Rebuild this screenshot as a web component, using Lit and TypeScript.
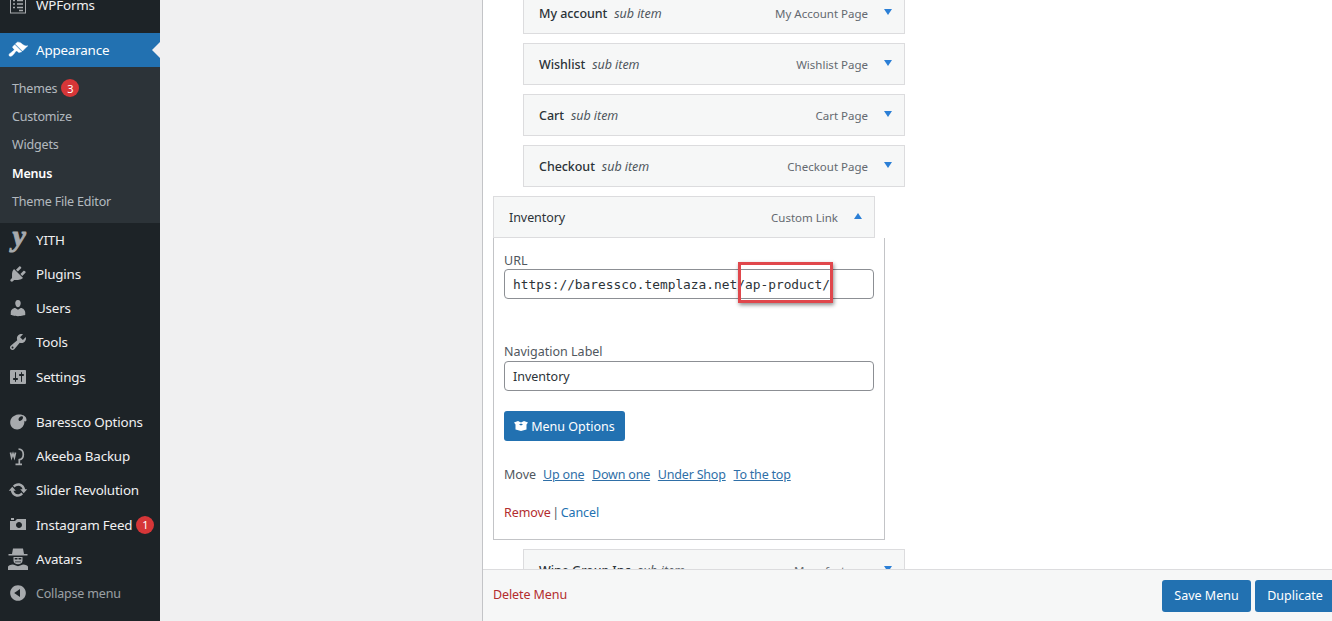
import { LitElement, html, css } from "lit";
import { customElement } from "lit/decorators.js";

const P: Record<string, string> = {
  appearance: "M14.48 11.06L7.41 3.99l1.5-1.5c.5-.56 2.3-.47 3.51.32 1.21.8 1.43 1.28 2.91 2.1 1.18.64 2.45 1.26 4.45.85zm-.71.71L6.7 4.7 4.93 6.47c-.39.39-.39 1.02 0 1.41l1.06 1.06c.39.39.39 1.03 0 1.42-.6.6-1.43 1.11-2.21 1.69-.35.26-.7.53-1.01.84C1.43 13.23.4 14.85 1.4 15.9c.99 1.04 2.65 0 3.99-1.5.3-.32.58-.67.84-1.02.59-.77 1.09-1.6 1.68-2.2.4-.39 1.03-.39 1.42 0l1.06 1.06c.39.39 1.02.39 1.41 0z",
  plugins: "M13.11 4.36L9.87 7.6 8 5.73l3.24-3.24c.35-.34 1.05-.2 1.56.32.52.51.66 1.21.31 1.55zm-8 1.77l.91-1.12 9.01 9.01-1.19.84c-.71.71-2.63 1.16-3.82 1.16H6.14L4.9 17.26c-.59.59-1.54.59-2.12 0-.59-.58-.59-1.53 0-2.12l1.24-1.24v-3.88c0-1.13.4-3.19 1.09-3.89zm7.26 3.97l3.24-3.24c.34-.35 1.04-.21 1.55.31.52.51.66 1.21.31 1.55l-3.24 3.25z",
  users: "M10 9.25c-2.27 0-2.73-3.44-2.73-3.44C7 4.02 7.82 2 9.97 2c2.16 0 2.98 2.02 2.71 3.81 0 0-.41 3.44-2.68 3.44zm0 2.57L12.72 10c2.39 0 4.52 2.33 4.52 4.53v2.49s-3.65 1.13-7.24 1.13c-3.65 0-7.24-1.13-7.24-1.13v-2.49c0-2.25 1.94-4.48 4.47-4.48z",
  tools: "M16.68 9.77c-1.34 1.34-3.3 1.67-4.95.99l-5.41 6.52c-.99.99-2.59.99-3.58 0s-.99-2.59 0-3.57l6.52-5.42c-.68-1.65-.35-3.61.99-4.95 1.28-1.28 3.12-1.62 4.72-1.06l-2.89 2.89 2.82 2.82 2.86-2.87c.53 1.58.18 3.39-1.08 4.65zM3.81 16.21c.4.39 1.04.39 1.43 0 .4-.4.4-1.04 0-1.43-.39-.4-1.03-.4-1.43 0-.39.39-.39 1.03 0 1.43z",
  settings: "M18 16V4c0-.55-.45-1-1-1H3c-.55 0-1 .45-1 1v12c0 .55.45 1 1 1h14c.55 0 1-.45 1-1zM8 11h1c.55 0 1 .45 1 1s-.45 1-1 1H8v1.5c0 .28-.22.5-.5.5s-.5-.22-.5-.5V13H6c-.55 0-1-.45-1-1s.45-1 1-1h1V5.5c0-.28.22-.5.5-.5s.5.22.5.5V11zm5-2h-1c-.55 0-1-.45-1-1s.45-1 1-1h1V5.5c0-.28.22-.5.5-.5s.5.22.5.5V7h1c.55 0 1 .45 1 1s-.45 1-1 1h-1v5.5c0 .28-.22.5-.5.5s-.5-.22-.5-.5V9z",
  palette: "M10.2 2.6c4.4-.6 8.3 1.6 8.3 5.2 0 1-.5 1.7-1.2 1.7-.4 0-.7-.2-1-.5.6 3.9-2.4 8.4-7.2 8.4-3.9 0-6.9-2.8-6.9-6.9 0-4.2 3.3-7.3 8-7.900zm3.4 1.600c-1.400 0-3.100 1.500-3.100 3.200 0 .9.6 1.500 1.400 1.500 1.600 0 3.100-1.700 3.100-3.300 0-.9-.6-1.400-1.400-1.400z",
  update: "M10.2 3.28c3.53 0 6.43 2.61 6.92 6h2.08l-3.5 4-3.5-4h2.32c-.45-1.97-2.21-3.45-4.32-3.45-1.45 0-2.73.71-3.54 1.78L4.95 5.66C6.23 4.2 8.11 3.28 10.2 3.28zm-.4 13.44c-3.52 0-6.43-2.61-6.92-6H.8l3.5-4c1.17 1.33 2.33 2.67 3.5 4H5.48c.45 1.97 2.21 3.45 4.32 3.45 1.45 0 2.73-.71 3.54-1.78l1.71 1.95c-1.28 1.46-3.15 2.38-5.25 2.38z",
  camera: "M6 5V3H3v2h3zm12 10V4H9L7 6H2v9h16zm-7-8c1.66 0 3 1.34 3 3s-1.34 3-3 3-3-1.34-3-3 1.34-3 3-3z",
  collapse: "M10 2.16c4.33 0 7.84 3.51 7.84 7.84s-3.51 7.84-7.84 7.84S2.16 14.33 2.16 10 5.71 2.16 10 2.16zm2 11.72V6.12L6.18 9.97z",
};

const dash = (n: string) => html`<svg class="ico" viewBox="0 0 20 20"><path d=${P[n]} fill="currentColor"></path></svg>`;

const special: Record<string, () => unknown> = {
  wpforms: () => html`<svg class="ico" viewBox="0 0 20 20" fill="none" stroke="currentColor">
    <rect x="2.500" y="2" width="15" height="16" stroke-width="1"></rect>
    <path d="M5 5.500h2M9 5.500h6M5 9h2M9 9h6M5 12.500h2M9 12.500h6M11 15.500h4" stroke-width="1.400"></path></svg>`,
  yith: () => html`<span class="yith">y</span>`,
  akeeba: () => html`<svg class="ico" viewBox="0 0 20 20" fill="none" stroke="currentColor" stroke-width="1.700">
    <path d="M2.500 6.500l1.100 5 1.400-3.800 1.400 3.800 1.100-5"></path>
    <path d="M10.500 3c3.500.3 4.800 2.800 4.800 5.500 0 2.800-1.400 4.800-4 5.200v4M7.500 18.300h6.500"></path></svg>`,
  avatars: () => html`<svg class="ico big" viewBox="0 0 22 22" fill="currentColor">
    <path d="M6 0.500h10l1 5.500h3.500v1.600h-19V6H5z"></path>
    <path d="M6.500 9h9v3.800c0 2-2 3.400-4.500 3.400s-4.500-1.400-4.500-3.400zm1.200 1v1.600h2.800V10zm3.800 0v1.600h2.800V10zM8 13.500v.8h6v-.8z" fill-rule="evenodd"></path>
    <path d="M1 22v-3.300c0-1.200 2.500-2 5-2.300l5 1.800 5-1.800c2.500.3 5 1.100 5 2.300V22z"></path></svg>`,
};

type Side = { label: string; icon: string; badge?: string; cls?: string };
const group1: Side[] = [
  { label: "YITH", icon: "yith" },
  { label: "Plugins", icon: "plugins" },
  { label: "Users", icon: "users" },
  { label: "Tools", icon: "tools" },
  { label: "Settings", icon: "settings" },
];
const group2: Side[] = [
  { label: "Baressco Options", icon: "palette" },
  { label: "Akeeba Backup", icon: "akeeba" },
  { label: "Slider Revolution", icon: "update" },
  { label: "Instagram Feed", icon: "camera", badge: "1" },
  { label: "Avatars", icon: "avatars" },
  { label: "Collapse menu", icon: "collapse", cls: "muted" },
];
const subs = ["Customize", "Widgets"];
const before = [
  ["My account", "My Account Page"],
  ["Wishlist", "Wishlist Page"],
  ["Cart", "Cart Page"],
  ["Checkout", "Checkout Page"],
];

@customElement("app-root")
export class AppRoot extends LitElement {
  static styles = css`
    :host {
      display: flex;
      width: 1332px;
      height: 621px;
      overflow: hidden;
      background: #f0f0f1;
      font-family: "Noto Sans", "Open Sans", sans-serif;
      font-size: 12.500px;
      color: #3c434a;
    }
    .side {
      width: 160px;
      flex: none;
      background: #1d2327;
      color: #f0f0f1;
      font-size: 13.400px;
      letter-spacing: -0.180px;
    }
    .list { margin-top: -12px; }
    .item {
      height: 34.250px;
      display: flex;
      align-items: center;
      box-sizing: border-box;
    }
    .slot {
      width: 36px;
      flex: none;
      display: flex;
      justify-content: center;
      color: #a7aaad;
    }
    .ico { width: 20px; height: 20px; display: block; }
    .ico.big { width: 22px; height: 22px; }
    .active .ico { stroke: currentColor; stroke-width: 0.500px; }
    .yith {
      font: italic bold 30px/20px "Liberation Serif", serif;
      -webkit-text-stroke: 1px currentColor;
      height: 22px;
      margin: -6px 0 0 2px;
    }
    .gap1 { height: 11px; }
    .gap2 { height: 11px; }
    .active {
      height: 34px;
      background: #2271b1;
      color: #fff;
      position: relative;
    }
    .active .slot { color: #fff; }
    .active::after {
      content: "";
      position: absolute;
      right: 0;
      top: 50%;
      margin-top: -8px;
      border: 8px solid transparent;
      border-right-color: #f0f0f1;
      border-left-width: 0;
    }
    .sub {
      background: #2c3338;
      padding: 7px 0;
      font-size: 12.500px;
      color: rgba(240, 246, 252, 0.7);
    }
    .sub div {
      height: 28.250px;
      padding-left: 12px;
      display: flex;
      align-items: center;
      gap: 4px;
    }
    .sub .cur { color: #fff; font-weight: 600; }
    .badge {
      width: 18px;
      height: 18px;
      border-radius: 50%;
      background: #d63638;
      color: #fff;
      font-size: 11px;
      display: inline-flex;
      align-items: center;
      justify-content: center;
      letter-spacing: 0;
    }
    .item .badge { margin-left: 4px; }
    .muted { color: rgba(240, 246, 252, 0.6); font-size: 12.500px; }
    .muted .slot { color: #a7aaad; }

    .gutter { width: 322px; flex: none; }
    .panel {
      flex: 1;
      min-width: 0;
      background: #fff;
      border-left: 1px solid #c3c4c7;
      display: flex;
      flex-direction: column;
    }
    .menu {
      height: 569px;
      flex: none;
      overflow: hidden;
      position: relative;
    }
    .stack {
      margin-top: -8px;
      padding-left: 40px;
      display: flex;
      flex-direction: column;
      gap: 9px;
      align-items: flex-start;
    }
    .card {
      width: 382px;
      height: 42px;
      box-sizing: border-box;
      background: #f6f7f7;
      border: 1px solid #dcdcde;
      display: flex;
      align-items: center;
      padding: 0 12px 0 15px;
      flex: none;
    }
    .name { font-weight: 500; color: #2c3338; letter-spacing: -0.060px; }
    .subi { font-style: italic; color: #50575e; margin-left: 7px; letter-spacing: -0.050px; }
    .kind { margin-left: auto; font-size: 11.500px; color: #646970; }
    .tri {
      width: 0;
      height: 0;
      border-left: 4.500px solid transparent;
      border-right: 4.500px solid transparent;
      border-top: 6px solid #2b7fd6;
      margin: -2px 0 0 16px;
    }
    .tri.up { border-top: 0; border-bottom: 6px solid #2b7fd6; margin-top: -2px; }
    .open { margin-left: -30px; display: flex; flex-direction: column; }
    .open .name { font-weight: 400; }
    .box {
      width: 392px;
      height: 302px;
      box-sizing: border-box;
      border: 1px solid #c3c4c7;
      border-top: 0;
      padding: 15px 10px 0;
      position: relative;
      color: #50575e;
    }
    .lab { display: block; line-height: 16px; }
    .inp {
      width: 370px;
      height: 30px;
      box-sizing: border-box;
      border: 1px solid #8c8f94;
      border-radius: 4px;
      padding: 0 8px;
      display: flex;
      align-items: center;
      color: #2c3338;
    }
    .mono { font-family: "DejaVu Sans Mono", monospace; font-size: 12.850px; }
    .f2 { margin-top: 45px; margin-bottom: 1px; }
    .btn {
      background: #2271b1;
      color: #fff;
      border-radius: 3px;
      display: inline-flex;
      align-items: center;
      justify-content: center;
      box-sizing: border-box;
    }
    .opt { width: 121px; height: 30px; margin-top: 20px; gap: 3px; }
    .opt svg { width: 14px; height: 10px; }
    .move { margin-top: 25px; line-height: 18px; display: flex; }
    .move a { color: #2f6fa7; text-decoration: underline; margin-left: 7.800px; letter-spacing: -0.200px; }
    .move a:first-of-type { margin-left: 7px; }
    .act { margin-top: 20px; line-height: 18px; letter-spacing: -0.100px; word-spacing: -1.500px; }
    .rem { color: #b32d2e; }
    .can { color: #2271b1; }
    .note {
      position: absolute;
      left: 244px;
      top: 24px;
      width: 95px;
      height: 41px;
      box-sizing: border-box;
      border: 3px solid #e0474c;
      box-shadow: 1px 2px 4px rgba(0, 0, 0, 0.45);
    }
    .foot {
      flex: 1;
      box-sizing: border-box;
      background: #f6f7f7;
      border-top: 1px solid #dcdcde;
      display: flex;
      align-items: center;
      padding: 0 0 0 10px;
      gap: 4px;
    }
    .del { color: #b32d2e; margin-right: auto; margin-bottom: 2px; letter-spacing: -0.100px; }
    .foot .btn { height: 32px; width: 89px; flex: none; }
    .foot .btn.dup { width: 80px; margin-right: -3px; }
  `;

  private sideItem(s: Side) {
    return html`<div class="item ${s.cls ?? ""}">
      <span class="slot">${special[s.icon] ? special[s.icon]() : dash(s.icon)}</span>
      <span>${s.label}</span>
      ${s.badge ? html`<span class="badge">${s.badge}</span>` : ""}
    </div>`;
  }

  private card(name: string, kind: string) {
    return html`<div class="card">
      <span class="name">${name}</span><span class="subi">sub item</span>
      <span class="kind">${kind}</span><span class="tri"></span>
    </div>`;
  }

  render() {
    return html`
      <nav class="side">
        <div class="list">
          ${this.sideItem({ label: "WPForms", icon: "wpforms" })}
          <div class="gap1"></div>
          <div class="item active"><span class="slot">${dash("appearance")}</span><span>Appearance</span></div>
          <div class="sub">
            <div>Themes <span class="badge">3</span></div>
            ${subs.map((s) => html`<div>${s}</div>`)}
            <div class="cur">Menus</div>
            <div>Theme File Editor</div>
          </div>
          ${group1.map((s) => this.sideItem(s))}
          <div class="gap2"></div>
          ${group2.map((s) => this.sideItem(s))}
        </div>
      </nav>
      <div class="gutter"></div>
      <main class="panel">
        <div class="menu">
          <div class="stack">
            ${before.map(([n, k]) => this.card(n, k))}
            <div class="open">
              <div class="card">
                <span class="name">Inventory</span>
                <span class="kind">Custom Link</span><span class="tri up"></span>
              </div>
              <div class="box">
                <label class="lab">URL</label>
                <div class="inp mono">https://baressco.templaza.net/ap-product/</div>
                <label class="lab f2">Navigation Label</label>
                <div class="inp">Inventory</div>
                <span class="btn opt">
                  <svg viewBox="0 0 14 10" fill="currentColor"><path d="M0 1.500L4 0l3 1.500L10 0l4 1.500-1.500 2V8.500L7 10 1.500 8.500v-5zM5 3.500L7 2.500l2 1-2 1z" fill-rule="evenodd"></path></svg>
                  Menu Options
                </span>
                <div class="move">Move
                  <a>Up one</a><a>Down one</a><a>Under Shop</a><a>To the top</a>
                </div>
                <div class="act"><span class="rem">Remove</span> | <span class="can">Cancel</span></div>
                <div class="note"></div>
              </div>
            </div>
            ${this.card("Wine Group Inc", "Manufacturer")}
          </div>
        </div>
        <footer class="foot">
          <span class="del">Delete Menu</span>
          <span class="btn">Save Menu</span>
          <span class="btn dup">Duplicate</span>
        </footer>
      </main>
    `;
  }
}
